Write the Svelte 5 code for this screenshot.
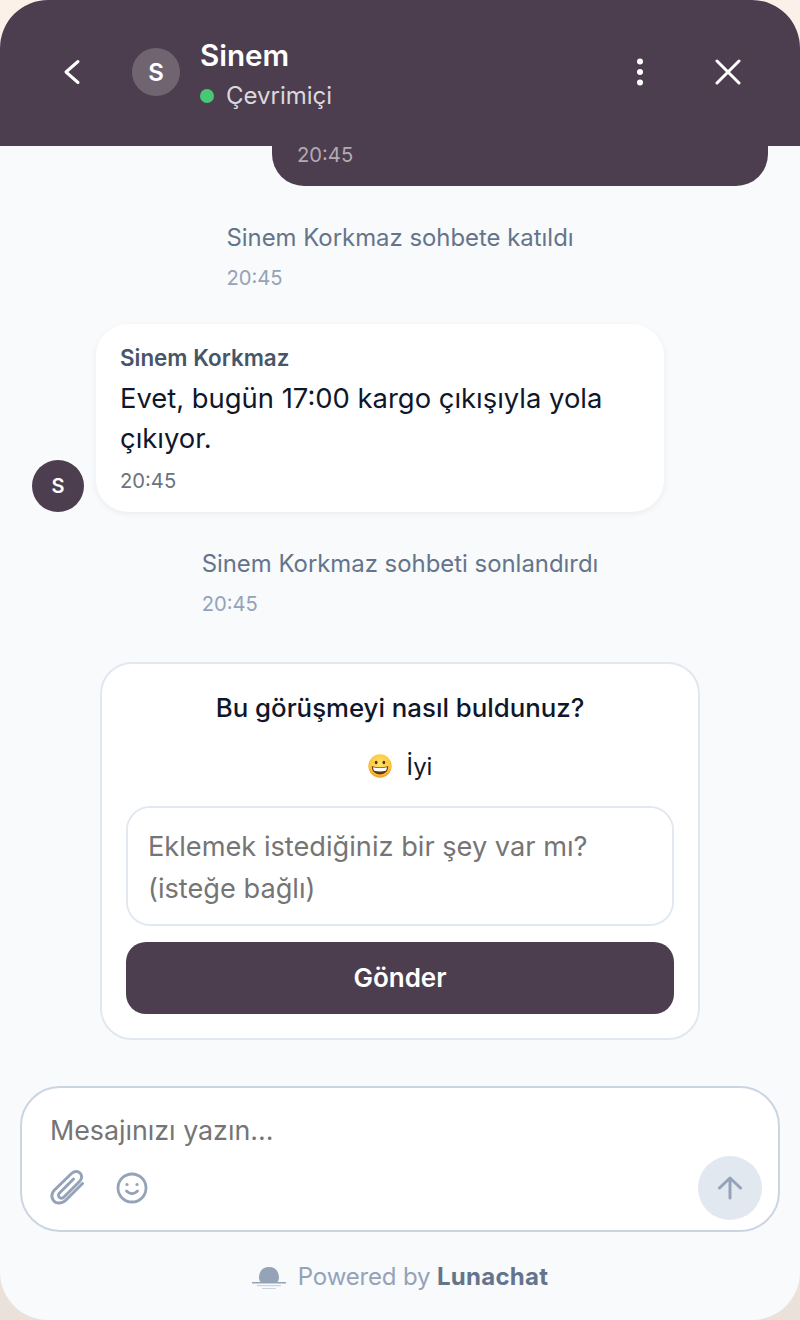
<script>
	const stamp = '20:45';
</script>

<div class="widget">
	<header class="top">
		<button class="icon-btn back" aria-label="Geri">
			<svg width="32" height="32" viewBox="0 0 32 32" fill="none" stroke="#fff" stroke-width="3" stroke-linecap="round" stroke-linejoin="round"><path d="M22 5.5 L10 16 L22 26.5" /></svg>
		</button>
		<div class="head-avatar">S</div>
		<div class="who">
			<div class="name">Sinem</div>
			<div class="status"><span class="dot"></span>Çevrimiçi</div>
		</div>
		<button class="icon-btn more" aria-label="Menü">
			<svg width="12" height="32" viewBox="0 0 12 32" fill="#fff"><circle cx="6" cy="5.5" r="3" /><circle cx="6" cy="16" r="3" /><circle cx="6" cy="26.5" r="3" /></svg>
		</button>
		<button class="icon-btn close" aria-label="Kapat">
			<svg width="26" height="26" viewBox="0 0 26 26" fill="none" stroke="#fff" stroke-width="3" stroke-linecap="round"><path d="M2 2 L24 24 M24 2 L2 24" /></svg>
		</button>
	</header>

	<main class="thread">
		<div class="mine"><span class="time">{stamp}</span></div>

		<div class="system first">
			<p>Sinem Korkmaz sohbete katıldı</p>
			<span class="time">{stamp}</span>
		</div>

		<div class="theirs">
			<div class="small-avatar">S</div>
			<div class="bubble">
				<div class="sender">Sinem Korkmaz</div>
				<p>Evet, bugün 17:00 kargo çıkışıyla yola çıkıyor.</p>
				<span class="time">{stamp}</span>
			</div>
		</div>

		<div class="system second">
			<p>Sinem Korkmaz sohbeti sonlandırdı</p>
			<span class="time">{stamp}</span>
		</div>

		<section class="rating">
			<h2>Bu görüşmeyi nasıl buldunuz?</h2>
			<div class="picked">
				<svg width="24" height="24" viewBox="0 0 26 26">
					<defs>
						<radialGradient id="face" cx="50%" cy="40%" r="60%">
							<stop offset="0%" stop-color="#ffe46b" />
							<stop offset="70%" stop-color="#fdc93f" />
							<stop offset="100%" stop-color="#f09a1c" />
						</radialGradient>
					</defs>
					<circle cx="13" cy="13" r="12.6" fill="url(#face)" />
					<ellipse cx="8.8" cy="9.2" rx="1.5" ry="1.9" fill="#4a3418" />
					<ellipse cx="17.2" cy="9.2" rx="1.5" ry="1.9" fill="#4a3418" />
					<path d="M4 13.4 Q13 15.6 22 13.4 Q21.6 22 13 22.2 Q4.4 22 4 13.4 Z" fill="#5a3616" />
					<path d="M5.4 14.4 Q13 16.2 20.6 14.4 Q20.4 17.2 19.4 18.2 Q13 19.6 6.6 18.2 Q5.6 17.2 5.4 14.4 Z" fill="#fff" />
				</svg>
				<span>İyi</span>
			</div>
			<textarea rows="2" placeholder="Eklemek istediğiniz bir şey var mı? (isteğe bağlı)"></textarea>
			<button class="send-rating">Gönder</button>
		</section>
	</main>

	<div class="composer">
		<input type="text" placeholder="Mesajınızı yazın..." />
		<div class="tools">
			<svg class="clip" width="36" height="36" viewBox="0 0 36 36" fill="none" stroke="#94a3b8" stroke-width="3" stroke-linecap="round" stroke-linejoin="round">
				<path d="M32.5 13.5 L16 30 C12 34 6 34 3.5 30.5 C1 27.5 1.5 23 4.5 20 L21.5 3.5 C24 1 28 1 30 3 C32.5 5.5 32 9 29.5 11.5 L14 27 C12.5 28.5 10.5 28.5 9.5 27.5 C8 26 8.5 24 9.5 23 L23.5 9" />
			</svg>
			<svg class="smile" width="32" height="32" viewBox="0 0 32 32" fill="none" stroke="#94a3b8" stroke-width="2.8" stroke-linecap="round">
				<circle cx="16" cy="16" r="14" />
				<path d="M10.5 19 Q16 24.5 21.5 19" />
				<circle cx="11" cy="12.5" r="1.6" fill="#94a3b8" stroke="none" />
				<circle cx="21" cy="12.5" r="1.6" fill="#94a3b8" stroke="none" />
			</svg>
		</div>
		<button class="send" aria-label="Gönder">
			<svg width="24" height="24" viewBox="0 0 24 24" fill="none" stroke="#94a3b8" stroke-width="3" stroke-linecap="round" stroke-linejoin="round"><path d="M12 22 V2 M1.5 12 L12 2 L22.5 12" /></svg>
		</button>
	</div>

	<footer class="brand">
		<svg width="34" height="26" viewBox="0 0 34 26">
			<path d="M7 15 C7 8 11 4 17 4 C23 4 27 8 27 15 C27 17 26 18 25.5 19 L8.5 19 C8 18 7 17 7 15 Z" fill="#94a3b8" />
			<rect x="0" y="19" width="34" height="1.5" fill="#94a3b8" />
			<rect x="5" y="22" width="24" height="1.2" fill="#cbd5e1" />
			<rect x="10" y="25" width="14" height="1" fill="#cbd5e1" />
		</svg>
		<span class="powered">Powered by <b>Lunachat</b></span>
	</footer>
</div>

<style>
	:global(body) {
		margin: 0;
		background: linear-gradient(180deg, #fcf1e8 0%, #eae2da 100%);
		font-family: Inter, "Noto Sans", sans-serif;
	}
	.widget {
		width: 800px;
		height: 1320px;
		background: #f8fafc;
		border-radius: 48px;
		overflow: hidden;
		display: flex;
		flex-direction: column;
	}
	.top {
		flex: none;
		height: 146px;
		box-sizing: border-box;
		background: #4d3e4f;
		display: flex;
		align-items: flex-start;
		padding: 48px 56px 0 56px;
		color: #fff;
	}
	.icon-btn {
		background: none;
		border: none;
		padding: 0;
		display: flex;
		align-items: center;
		justify-content: center;
	}
	.back {
		width: 32px;
		height: 48px;
	}
	.head-avatar {
		width: 48px;
		height: 48px;
		margin-left: 44px;
		border-radius: 50%;
		background: #716471;
		display: flex;
		align-items: center;
		justify-content: center;
		font-size: 24px;
		font-weight: 600;
	}
	.who {
		margin-left: 20px;
		margin-top: -11px;
		flex: 1;
	}
	.name {
		font-size: 29.6px;
		font-weight: 600;
		line-height: 36px;
	}
	.status {
		display: flex;
		align-items: center;
		font-size: 24px;
		line-height: 32px;
		margin-top: 7px;
		color: #dbd8dc;
	}
	.dot {
		width: 14px;
		height: 14px;
		border-radius: 50%;
		background: #48c774;
		margin-right: 12px;
	}
	.more {
		width: 12px;
		height: 48px;
		margin-right: 66px;
	}
	.close {
		width: 32px;
		height: 48px;
	}
	.thread {
		flex: 1;
		min-height: 0;
		display: flex;
		flex-direction: column;
	}
	.time {
		display: block;
		font-size: 20.2px;
		line-height: 28px;
		color: #94a3b8;
	}
	.mine {
		flex: none;
		align-self: flex-end;
		width: 496px;
		height: 40px;
		box-sizing: border-box;
		margin-right: 32px;
		padding-left: 25px;
		background: #4d3e4f;
		border-radius: 0 0 32px 32px;
	}
	.mine .time {
		color: #b2aab3;
		line-height: 18px;
	}
	.system {
		align-self: center;
	}
	.system p {
		margin: 0;
		font-size: 23.9px;
		line-height: 32px;
		color: #64748b;
	}
	.system .time {
		margin-top: 10px;
	}
	.first {
		margin-top: 36px;
	}
	.second {
		margin-top: 36px;
	}
	.theirs {
		margin: 32px 0 0 32px;
		display: flex;
		align-items: flex-end;
		gap: 12px;
	}
	.small-avatar {
		width: 52px;
		height: 52px;
		border-radius: 50%;
		background: #4d3e4f;
		color: #fff;
		font-size: 20px;
		font-weight: 600;
		display: flex;
		align-items: center;
		justify-content: center;
	}
	.bubble {
		width: 568px;
		height: 188px;
		box-sizing: border-box;
		padding: 20px 24px 0;
		background: #fff;
		border-radius: 32px;
		box-shadow: 0 2px 6px rgba(15, 23, 42, 0.06);
	}
	.sender {
		font-size: 22.4px;
		font-weight: 600;
		line-height: 28px;
		color: #475569;
	}
	.bubble p {
		margin: 6px 0 0;
		font-size: 27.4px;
		line-height: 40px;
		color: #0f172a;
	}
	.bubble .time {
		margin-top: 9px;
		color: #6b7280;
	}
	.rating {
		align-self: center;
		width: 600px;
		height: 378px;
		flex: none;
		box-sizing: border-box;
		margin-top: 44px;
		padding: 28px 24px 24px;
		background: #fff;
		border: 2px solid #e2e8f0;
		border-radius: 32px;
		display: flex;
		flex-direction: column;
		align-items: center;
	}
	.rating h2 {
		margin: 0;
		font-size: 25.8px;
		font-weight: 500;
		line-height: 32px;
		color: #0f172a;
	}
	.picked {
		display: flex;
		align-items: center;
		gap: 15px;
		margin-top: 26px;
		height: 32px;
		font-size: 24px;
		color: #0f172a;
	}
	.rating textarea {
		width: 548px;
		height: 120px;
		box-sizing: border-box;
		margin-top: 24px;
		padding: 18px 20px;
		border: 2px solid #e2e8f0;
		border-radius: 24px;
		background: #fff;
		font: 27.2px/42px Inter, sans-serif;
		resize: none;
		outline: none;
	}
	.rating textarea::placeholder, .composer input::placeholder {
		color: #757575;
		opacity: 1;
	}
	.send-rating {
		width: 548px;
		height: 72px;
		flex: none;
		margin-top: 16px;
		padding: 0 0 2px;
		border: none;
		border-radius: 20px;
		background: #4d3e4f;
		color: #fff;
		font: 600 26px Inter, sans-serif;
	}
	.composer {
		flex: none;
		position: relative;
		height: 146px;
		box-sizing: border-box;
		margin: 0 20px;
		padding: 23px 28px 0;
		background: #fff;
		border: 2px solid #cbd5e1;
		border-radius: 40px;
	}
	.composer input {
		display: block;
		width: 600px;
		height: 38px;
		padding: 0;
		border: none;
		outline: none;
		background: none;
		font: 26.8px Inter, sans-serif;
	}
	.tools {
		display: flex;
		align-items: center;
		gap: 30px;
		margin-top: 21px;
	}
	.send {
		position: absolute;
		right: 16px;
		bottom: 10px;
		width: 64px;
		height: 64px;
		border: none;
		padding: 0;
		border-radius: 50%;
		background: #e2e8f0;
		display: flex;
		align-items: center;
		justify-content: center;
	}
	.brand {
		flex: none;
		height: 88px;
		display: flex;
		align-items: center;
		justify-content: center;
		gap: 12px;
		font-size: 24px;
		color: #94a3b8;
	}
	.powered {
		letter-spacing: -0.15px;
	}
	.brand b {
		color: #64748b;
		font-weight: 700;
		letter-spacing: 0.25px;
	}
</style>
